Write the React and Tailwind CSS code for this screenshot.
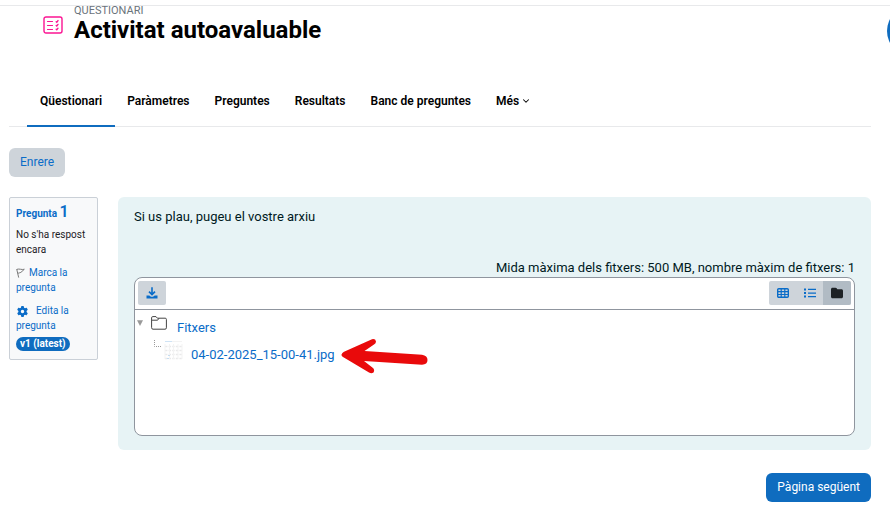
import { ChevronDown } from "lucide-react";
import { FaFolder, FaGear } from "react-icons/fa6";

const tabs = [
    { label: "Qüestionari", active: true },
    { label: "Paràmetres" },
    { label: "Preguntes" },
    { label: "Resultats" },
    { label: "Banc de preguntes" },
    { label: "Més", more: true },
];

const QuizIcon = () => (
    <svg viewBox="0 0 20 18" className="w-5 h-[18px] shrink-0" fill="none" stroke="#fb1593" strokeWidth="1.4" strokeLinecap="round">
        <rect x="1" y="1" width="18" height="16" rx="2" />
        <path d="M4.5 5.5h5M4.5 9.5h5M4.5 13.5h5" strokeWidth="1.2" />
        <path d="M13.200 5.700l.6.500 1.200-1.600M13.200 9.500l.6.500 1.200-1.600M13.200 13.300l.6.500 1.200-1.600" />
    </svg>
);

const DownloadIcon = () => (
    <svg viewBox="0 0 12 12" className="w-3 h-3" fill="none" stroke="currentColor">
        <path d="M6 .3v7M3 4.600l3 3 3-3" strokeWidth="1.6" />
        <path d="M.5 8.4h2.800L5 9.700h2l1.700-1.300h2.800v3H.5z" fill="currentColor" stroke="none" />
    </svg>
);

const GridIcon = () => (
    <svg viewBox="0 0 12 10" className="w-3 h-[10px]" fill="none" stroke="currentColor">
        <rect x=".7" y=".7" width="10.6" height="8.6" rx="1" strokeWidth="1.4" />
        <path d="M1 3.6h10M1 6.5h10M4.2 1v8M7.8 1v8" strokeWidth="1.2" />
    </svg>
);

const ListIcon = () => (
    <svg viewBox="0 0 12 10" className="w-3 h-[10px]" fill="currentColor">
        <path d="M4 .8h8v1.3H4zM4 4.4h8v1.3H4zM4 8h8v1.3H4z" />
        <path d="M0 .4h2v2H0zM0 4h2v2H0zM0 7.6h2v2H0z" />
    </svg>
);

const FlagIcon = () => (
    <svg viewBox="0 0 9 10" className="inline w-[9px] h-[10px] mr-1" fill="none" stroke="#7b7b7b">
        <path d="M.7 1l2 8.6M1 1.3c2.4-.8 4.4.7 7.3 0L6 3.4M1.8 5.4c1.400-.8 2.600-.2 4.200-2" />
    </svg>
);

const FolderOutline = () => (
    <svg viewBox="0 0 16 14" className="w-4 h-[14px]" fill="none" stroke="#444">
        <path d="M.6 11.6V1.8Q.6.6 1.8.6H5l1.4 1.6h7.8q1.2 0 1.2 1.2v8.4q0 1.4-1.4 1.4H2q-1.4 0-1.4-1.6zM8 2.2l-1.4 2H1" />
    </svg>
);

const Thumbnail = () => (
    <svg viewBox="0 0 19 20" className="w-[19px] h-5" fill="none">
        <path d="M1 1.500h7" stroke="#cfe3f5" />
        <path d="M8 1.500h10" stroke="#f3f3f3" />
        <path d="M1 6.5h17M1 10.5h17M1 14.5h17M1 18.5h17" stroke="#e9e9ea" strokeWidth="1.6" strokeDasharray="2.4 1.2" />
        <path d="M1 4v15M5.5 4v15M9.5 4v15M14 4v15M18 4v15" stroke="#f3f3f3" />
        <path d="M4 15.5h2M3 18.500h2" stroke="#c5ddf2" />
    </svg>
);

const Arrow = () => (
    <svg viewBox="0 0 90 36" className="absolute left-full top-1/2 ml-1.5 -mt-[17px] w-[90px] h-9" fill="#e90a0b">
        <path d="M.5 16.5Q1 15 3 13.8L31 1.2Q34.5.5 35 3.5 35 5.5 33 6.5L23.5 13 81 16.7Q86.5 17.5 86.5 22 86.5 26.5 81 26.7L23 23 32 30Q34 32 32.5 34.5 30.5 36 28 34.5L2 19Q.3 18 .5 16.5z" />
    </svg>
);

const Header = () => (
    <header className="relative flex items-center border-t border-[#e8e9eb] pl-[43px] h-[38px]">
        <QuizIcon />
        <div className="ml-[11px] -mt-px">
            <div className="text-[11px] leading-[11px] text-[#6a737b] uppercase">Questionari</div>
            <h1 className="text-2xl leading-7 font-bold text-black">Activitat autoavaluable</h1>
        </div>
        <button aria-label="Ajuda" className="absolute left-full -ml-[3px] top-0 w-[50px] h-[50px] rounded-full bg-[#0f6cbf]" />
    </header>
);

const Navigation = () => (
    <nav className="border-b border-[#e8e9eb] pl-[18px]">
        <ul className="flex -space-x-px">
            {tabs.map((tab) => (
                <li key={tab.label}>
                    <a
                        href="#"
                        className={
                            tab.active
                                ? "flex items-center h-[52px] pt-0.5 px-[13px] -mb-px border-b-2 border-[#0f6cbf]"
                                : "flex items-center h-[52px] pt-0.5 px-[13px] -mb-px border-b-2 border-transparent"
                        }
                    >
                        {tab.label}
                        {tab.more && <ChevronDown className="w-[10px] h-[10px] ml-0.5" strokeWidth={2.5} />}
                    </a>
                </li>
            ))}
        </ul>
    </nav>
);

const QuestionInfo = () => (
    <aside className="w-[89px] h-[163px] shrink-0 border border-[#cad0d7] bg-[#f8f9fa] rounded-xs px-1.5 pt-1.5 text-[10px] leading-[15px] text-[#1d2125]">
        <h3 className="font-bold text-[#0a6cc8] leading-4">
            Pregunta <span className="text-base leading-4 font-semibold">1</span>
        </h3>
        <div className="mt-[5px]">No s'ha respost encara</div>
        <a href="#" className="block mt-2 text-[#0a6cc8]">
            <FlagIcon />
            Marca la pregunta
        </a>
        <a href="#" className="block mt-2 text-[#0a6cc8]">
            <FaGear className="inline w-[11px] h-[11px] ml-px mr-2" />
            Edita la pregunta
        </a>
        <span className="block w-fit mt-1 rounded-full bg-[#0f6cbf] text-white font-bold leading-[14px] px-1">v1 (latest)</span>
    </aside>
);

const FileManager = () => (
    <div className="h-[159px] border border-[#8f959e] rounded-lg bg-white overflow-hidden text-[#0a6cc8]">
        <div className="flex items-center justify-between h-8 px-[3px] pb-px border-b border-[#8f959e]">
            <button aria-label="Baixa-ho tot" className="w-7 h-6 flex items-center justify-center rounded-xs bg-[#ced4da]">
                <DownloadIcon />
            </button>
            <div className="flex h-6 rounded-xs overflow-hidden bg-[#ced4da]">
                <button aria-label="Icones" className="w-7 flex items-center justify-center">
                    <GridIcon />
                </button>
                <button aria-label="Llista" className="w-[26px] flex items-center justify-center">
                    <ListIcon />
                </button>
                <button aria-label="Arbre" className="w-7 flex items-center justify-center bg-[#b1bbc4] text-[#1d2125]">
                    <FaFolder className="w-3 h-3" />
                </button>
            </div>
        </div>
        <ul className="pl-0.5 pt-1.5">
            <li className="flex items-start">
                <svg viewBox="0 0 6 6" className="w-1.5 h-1.5 mt-1" fill="#999">
                    <path d="M0 .3h6L3 6z" />
                </svg>
                <div className="ml-2">
                    <FolderOutline />
                </div>
                <a href="#" className="ml-2.5 mt-1 leading-4">Fitxers</a>
            </li>
            <li className="flex items-start mt-1">
                <svg viewBox="0 0 8 8" className="w-2 h-2 ml-[17px]" fill="none" stroke="#999" strokeDasharray="1 1">
                    <path d="M.5 0v6.5H8" />
                </svg>
                <div className="ml-0.5">
                    <Thumbnail />
                </div>
                <a href="#" className="relative ml-2 mt-[7px] leading-4">
                    04-02-2025_15-00-41.jpg
                    <Arrow />
                </a>
            </li>
        </ul>
    </div>
);

export default function App() {
    return (
        <div className="min-h-screen overflow-hidden bg-white pt-[5px] font-[Roboto,sans-serif] text-[13px] text-[#1d2125]">
            <Header />
            <main className="pl-[9px] pr-[19px]">
                <div className="pt-8 text-xs font-semibold text-black">
                    <Navigation />
                </div>
                <button className="mt-[21px] h-[29px] px-[11px] pb-0.5 rounded-md bg-[#ced4da] text-xs text-[#0a6cc8]">Enrere</button>
                <div className="flex items-start gap-5 mt-5">
                    <QuestionInfo />
                    <section className="flex-1 rounded-md bg-[#e7f3f5] px-4 pt-3 pb-3.5 text-[#001a1e]">
                        <p className="leading-4">Si us plau, pugeu el vostre arxiu</p>
                        <p className="mt-[35px] mb-px leading-4 text-right">
                            Mida màxima dels fitxers: 500 MB, nombre màxim de fitxers: 1
                        </p>
                        <FileManager />
                    </section>
                </div>
                <div className="flex justify-end mt-[23px]">
                    <button className="h-[29px] px-[11px] pb-0.5 rounded-md bg-[#0f6cbf] text-xs text-white">Pàgina següent</button>
                </div>
            </main>
        </div>
    );
}
